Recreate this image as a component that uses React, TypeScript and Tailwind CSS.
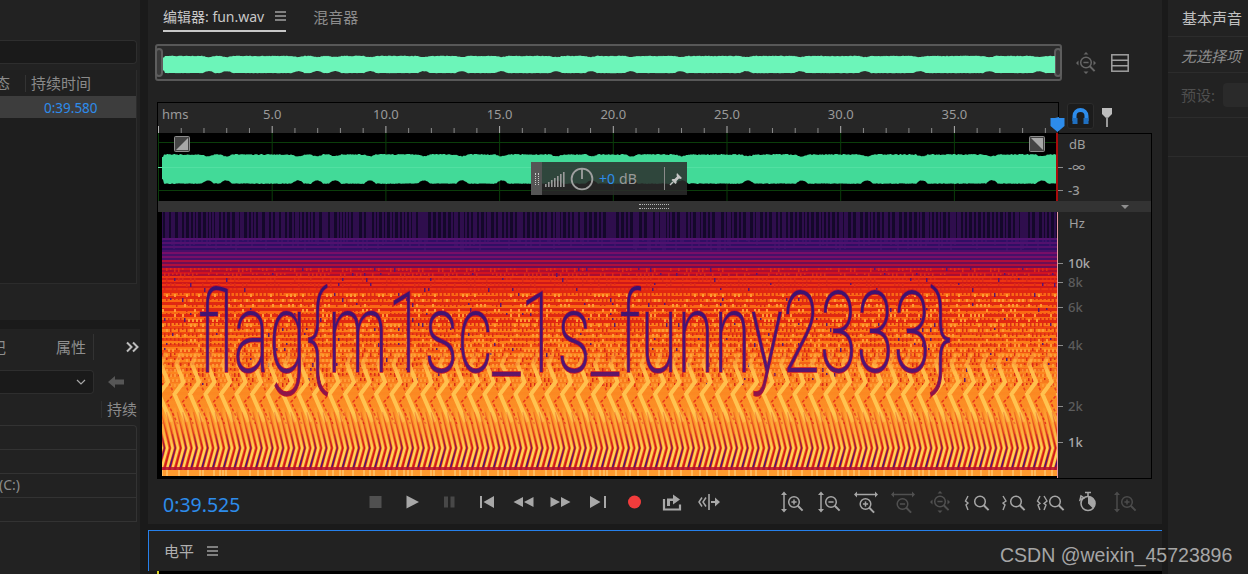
const cjk = { fontFamily: '"Noto Sans", "Noto Sans CJK SC", sans-serif' };

// small seeded random so the picture is the same on each load
function makeRandom(seed: number) {
  let s = seed;
  return () => {
    s = (s * 1664525 + 1013904223) % 4294967296;
    return s / 4294967296;
  };
}

const dips = [46, 64, 136, 155, 173, 208, 262, 300, 340, 395, 430, 470, 520, 586, 640, 705, 760, 830, 880];

function envelope(x: number) {
  let v = 1;
  for (const d of dips) {
    const dist = Math.abs(x - d);
    if (dist < 6) v = Math.min(v, 0.78 + 0.22 * (dist / 6) * (dist / 6));
  }
  return v;
}

function wavePath(width: number, mid: number, amp: number, seed: number) {
  const rand = makeRandom(seed);
  const top: string[] = [];
  const bottom: string[] = [];
  for (let x = 0; x <= width; x += 1) {
    const edge = x < 2 ? 0.7 : 1;
    const e = envelope((x / width) * 896) * edge;
    const eTop = 1 - (1 - e) * 0.55;
    top.push(`${x} ${(mid - amp * eTop * (0.93 + rand() * 0.08)).toFixed(1)}`);
    bottom.unshift(`${x} ${(mid + amp * e * (0.95 + rand() * 0.05)).toFixed(1)}`);
  }
  return `M${top.join("L")}L${bottom.join("L")}Z`;
}

function lerpColor(a: number[], b: number[], t: number) {
  return `rgb(${a.map((v, i) => Math.round(v + (b[i] - v) * t)).join(",")})`;
}

const stops: [number, number[], number[]][] = [
  [26, [48, 14, 100], [84, 16, 110]],
  [38, [120, 14, 104], [72, 16, 104]],
  [48, [176, 14, 60], [110, 14, 84]],
  [56, [210, 18, 32], [170, 14, 48]],
  [64, [238, 52, 18], [206, 24, 26]],
  [78, [250, 104, 20], [226, 40, 16]],
  [110, [252, 126, 26], [238, 70, 16]],
  [170, [252, 140, 36], [250, 112, 24]],
];

function specRows() {
  const rows: { y: number; h: number; fill: string }[] = [];
  let y = 0;
  let i = 0;
  while (y < 256) {
    const h = y < 78 ? 2 : 3;
    let seg = 0;
    while (seg < stops.length - 1 && stops[seg + 1][0] <= y) seg++;
    const t = i % 2 === 0 ? 0 : 1;
    const fill = y < 26 ? "#14082a" : lerpColor(stops[seg][1], stops[seg][2], t);
    rows.push({ y, h, fill });
    y += h;
    i++;
  }
  return rows;
}

function specDetail() {
  const rand = makeRandom(91);
  let purple = "";
  let red = "";
  let light = "";
  let top = "";
  for (let x = 0; x < 896; x += 2 + Math.floor(rand() * 4)) {
    top += `M${x} 0v${26 + Math.floor(rand() * 14)}`;
  }
  // dotted partials through the middle
  for (let row = 56; row < 176; row += 5) {
    for (let x = (row % 3) * 2; x < 896; x += 4) {
      const chance = row < 135 ? 0.7 : 0.4;
      if (rand() < chance) {
        const h = 2 + Math.floor(rand() * 3);
        if (rand() < 0.07) purple += `M${x} ${row}h1.5v${h}h-1.5z`;
        else red += `M${x} ${row}h1.5v${h}h-1.5z`;
      } else if (row > 76) {
        light += `M${x} ${row + 1}h2v3h-2z`;
      }
    }
  }
  return { top, purple, red, light };
}

function chevrons() {
  const out: { yellow: string; dark: string } = { yellow: "", dark: "" };
  for (let x = -30; x < 930; x += 15.5) {
    out.yellow += `M${x + 3} 140L${x - 2} 152L${x + 5} 170L${x - 4} 182L${x + 8} 210`;
    out.dark += `M${x + 10} 152L${x + 5} 168L${x + 11} 182L${x + 4} 190L${x + 15} 212`;
  }
  return out;
}

function fineSlants() {
  let yellow = "";
  let purple = "";
  let red = "";
  for (let x = -20; x < 910; x += 5.4) {
    yellow += `M${x} 196L${x + 9} 236L${x + 3} 258`;
    red += `M${x + 2.9} 200L${x + 11.9} 236L${x + 5.9} 258`;
  }
  for (let x = -20; x < 910; x += 10.8) {
    purple += `M${x + 9} 222L${x + 11.6} 236L${x + 6} 256`;
  }
  return { yellow, purple, red };
}

const rows = specRows();
const detail = specDetail();
const chev = chevrons();
const slants = fineSlants();

function bottomTicks() {
  const rand = makeRandom(7);
  let d = "";
  for (let x = 0; x < 896; x += 3 + Math.floor(rand() * 10)) d += `M${x} 258v6`;
  return d;
}
const baseTicks = bottomTicks();

function Spectrogram() {
  return (
    <svg className="block h-[266px] w-[900px]" viewBox="0 0 900 266">
      <defs>
        <clipPath id="specClip">
          <rect width="896" height="264" />
        </clipPath>
        <linearGradient id="specBase" gradientUnits="userSpaceOnUse" x1="0" x2="0" y1="130" y2="258">
          <stop offset="0" stopColor="#fb8a22" stopOpacity="0" />
          <stop offset="0.35" stopColor="#fb8a22" stopOpacity="0.85" />
          <stop offset="0.6" stopColor="#fc9228" />
          <stop offset="0.8" stopColor="#f2641e" />
          <stop offset="1" stopColor="#e0341e" />
        </linearGradient>
        <linearGradient id="chevY" gradientUnits="userSpaceOnUse" x1="0" x2="0" y1="138" y2="212">
          <stop offset="0" stopColor="#ffb845" stopOpacity="0.15" />
          <stop offset="0.3" stopColor="#ffbe4c" />
          <stop offset="0.85" stopColor="#ffc552" />
          <stop offset="1" stopColor="#ffc552" stopOpacity="0.4" />
        </linearGradient>
        <linearGradient id="chevR" gradientUnits="userSpaceOnUse" x1="0" x2="0" y1="150" y2="212">
          <stop offset="0" stopColor="#ee4a1a" stopOpacity="0.2" />
          <stop offset="0.5" stopColor="#e8381a" />
        </linearGradient>
        <linearGradient id="slantY" gradientUnits="userSpaceOnUse" x1="0" x2="0" y1="196" y2="236">
          <stop offset="0" stopColor="#ffc94e" stopOpacity="0.1" />
          <stop offset="1" stopColor="#ffd256" />
        </linearGradient>
        <linearGradient id="slantR" gradientUnits="userSpaceOnUse" x1="0" x2="0" y1="196" y2="236">
          <stop offset="0" stopColor="#d81e1e" stopOpacity="0.15" />
          <stop offset="1" stopColor="#c8141e" />
        </linearGradient>
        <linearGradient id="slantP" gradientUnits="userSpaceOnUse" x1="0" x2="0" y1="222" y2="250">
          <stop offset="0" stopColor="#7a1450" stopOpacity="0.2" />
          <stop offset="1" stopColor="#4a1478" />
        </linearGradient>
        <linearGradient id="flagInk" gradientUnits="userSpaceOnUse" x1="0" x2="0" y1="-90" y2="30">
          <stop offset="0" stopColor="#3a1270" />
          <stop offset="0.7" stopColor="#4e1676" />
          <stop offset="1" stopColor="#a0143c" />
        </linearGradient>
      </defs>
      <rect width="900" height="266" fill="#000" />
      <g transform="translate(4,0)" clipPath="url(#specClip)">
        {rows.map((r) => (
          <rect key={r.y} x="0" y={r.y} width="896" height={r.h} fill={r.fill} />
        ))}
        <path d={detail.top} stroke="#4b1470" strokeWidth="1" fill="none" />
        <rect y="130" width="896" height="128" fill="url(#specBase)" />
        <path d={detail.light} fill="#fd9a34" />
        <path d={detail.red} fill="#d92a18" />
        <path d={detail.purple} fill="#5a1470" />
        <path d={chev.dark} stroke="url(#chevR)" strokeWidth="1.6" strokeDasharray="3 2" fill="none" />
        <path d={chev.yellow} stroke="url(#chevY)" strokeWidth="4" fill="none" />
        <path d={slants.red} stroke="url(#slantR)" strokeWidth="1.2" fill="none" />
        <path d={slants.yellow} stroke="url(#slantY)" strokeWidth="2.4" fill="none" />
        <path d={slants.purple} stroke="url(#slantP)" strokeWidth="1.3" fill="none" />
        <rect y="255" width="896" height="3" fill="#b5122e" opacity="0.85" />
        <rect y="258" width="896" height="6" fill="#ff9a2e" />
        <path d={baseTicks} stroke="#ffd98a" strokeWidth="1" fill="none" />
        <g transform="translate(36,160) scale(0.588,1)">
          <text
            fill="url(#flagInk)"
            stroke="#c4142c"
            strokeWidth="1.6"
            paintOrder="stroke"
            style={{ fontFamily: "Roboto, sans-serif", fontSize: 114, fontWeight: 200 }}
          >
            {"flag{m1sc_1s_funny2333}"}
          </text>
        </g>
      </g>
      <rect x="899" width="1" height="266" fill="#e79aa0" />
    </svg>
  );
}

const seconds = Array.from({ length: 40 }, (_, i) => i);
const X0 = 0.5;
const PX = 22.74;

function Ruler() {
  return (
    <svg className="block h-[31px] w-[902px]" viewBox="0 0 902 31">
      {seconds.map((s) => (
        <line
          key={s}
          x1={X0 + s * PX}
          x2={X0 + s * PX}
          y1={s % 5 === 0 ? 23 : 25}
          y2="31"
          stroke={s % 5 === 0 ? "#b0b0b0" : "#8a8a8a"}
        />
      ))}
      <text x="4" y="16" fill="#9a9a9a" style={{ fontFamily: '"Noto Sans", sans-serif', fontSize: 13 }}>
        hms
      </text>
      {[5, 10, 15, 20, 25, 30, 35].map((s) => (
        <text
          key={s}
          x={X0 + s * PX}
          y="16"
          textAnchor="middle"
          fill="#9a9a9a"
          style={{ fontFamily: '"Noto Sans", sans-serif', fontSize: 13 }}
        >
          {s}.0
        </text>
      ))}
    </svg>
  );
}

const trackWave = wavePath(896, 36, 15, 33);
const miniWave = wavePath(892, 9.5, 8.8, 12);

function TrackWave() {
  return (
    <svg className="block h-[68px] w-[900px]" viewBox="0 0 900 68">
      <rect width="900" height="68" fill="#000" />
      <line x1="0" x2="900" y1="9.5" y2="9.5" stroke="#0b3d0b" />
      <line x1="0" x2="900" y1="57.5" y2="57.5" stroke="#0b3d0b" />
      {seconds
        .filter((s) => s % 5 === 0)
        .map((s) => (
          <line key={s} x1={X0 + s * PX} x2={X0 + s * PX} y1="0" y2="68" stroke="#0b3d0b" />
        ))}
      <line x1="0" x2="6" y1="34.5" y2="34.5" stroke="#5ce6a8" />
      <path d={trackWave} transform="translate(4,0)" fill="#42da98" />
      <line x1="4" x2="898" y1="34.5" y2="34.5" stroke="#52e0a2" />
      <rect x="898" width="2" height="68" fill="#a80c0c" />
    </svg>
  );
}

function FadeHandle({ flip }: { flip?: boolean }) {
  return (
    <svg className="h-[16px] w-[16px]" viewBox="0 0 16 16">
      <rect x="0.5" y="0.5" width="15" height="15" rx="1" fill="#444" stroke="#8c8c8c" />
      <path d={flip ? "M2 2H14V14Z" : "M14 2V14H2Z"} fill="#a8a8a8" />
    </svg>
  );
}

function Zoomer({
  cx,
  cy,
  mark,
  color,
}: {
  cx: number;
  cy: number;
  mark?: "plus" | "minus";
  color: string;
}) {
  return (
    <g stroke={color} fill="none" strokeWidth="1.5">
      <circle cx={cx} cy={cy} r="5.3" />
      <line x1={cx + 3.8} y1={cy + 3.8} x2={cx + 8.6} y2={cy + 8.6} strokeWidth="2" />
      {mark && <line x1={cx - 2.6} x2={cx + 2.6} y1={cy} y2={cy} />}
      {mark === "plus" && <line x1={cx} x2={cx} y1={cy - 2.6} y2={cy + 2.6} />}
    </g>
  );
}

function Box({ children, wide }: { children: React.ReactNode; wide?: boolean }) {
  return (
    <svg className={wide ? "h-[24px] w-[37px]" : "h-[24px] w-[30px]"} viewBox={wide ? "0 0 37 24" : "0 0 30 24"}>
      {children}
    </svg>
  );
}

const on = "#a6a6a6";
const off = "#505050";

function VArrow({ x, color }: { x: number; color: string }) {
  return (
    <g>
      <line x1={x} x2={x} y1="4" y2="20" stroke={color} strokeWidth="1.5" />
      <path d={`M${x - 3} 5L${x} 1.5L${x + 3} 5ZM${x - 3} 19L${x} 22.5L${x + 3} 19Z`} fill={color} />
    </g>
  );
}

function HArrow({ color }: { color: string }) {
  return (
    <g>
      <line x1="6" x2="24" y1="4.5" y2="4.5" stroke={color} strokeWidth="1.5" />
      <path d={`M6 1.5L3 4.5L6 7.5ZM24 1.5L27 4.5L24 7.5Z`} fill={color} />
    </g>
  );
}

const zoomIcons = [
  <Box key="a"><VArrow x={7} color={on} /><Zoomer cx={17} cy={12} mark="plus" color={on} /></Box>,
  <Box key="b"><VArrow x={7} color={on} /><Zoomer cx={17} cy={12} mark="minus" color={on} /></Box>,
  <Box key="c"><HArrow color={on} /><Zoomer cx={14.5} cy={14} mark="plus" color={on} /></Box>,
  <Box key="d"><HArrow color={off} /><Zoomer cx={14.5} cy={14} mark="minus" color={off} /></Box>,
  <Box key="e">
    <Zoomer cx={15} cy={11.5} mark="minus" color={off} />
    <path d="M15 1L12.5 3.5H17.5ZM5 12L7.5 9.5V14.5ZM25 12L22.5 9.5V14.5ZM15 23L12.5 20.5H17.5Z" fill={off} />
  </Box>,
  <Box key="f">
    <path d="M6 6L3.5 11L6 13L4 15L6 20" stroke={on} strokeWidth="1.4" fill="none" />
    <Zoomer cx={18} cy={11.5} color={on} />
  </Box>,
  <Box key="g">
    <path d="M4 6L7 11L4 13L6 15L4 20" stroke={on} strokeWidth="1.4" fill="none" />
    <Zoomer cx={17} cy={11.5} color={on} />
  </Box>,
  <Box key="h">
    <path d="M4 6L1.5 11L4 13.5L2 15L4 20M8 6L11 11L8 13.5L10 15L8 20" stroke={on} strokeWidth="1.4" fill="none" />
    <Zoomer cx={19} cy={11.5} color={on} />
  </Box>,
  <Box key="i">
    <circle cx="15" cy="13.5" r="7" stroke={on} strokeWidth="1.6" fill="none" />
    <path d="M15 13.5V6.5A7 7 0 0 1 20 18.5Z" fill={on} />
    <path d="M12 2.5H18M15 2.5V6M8 6L7 10L11 8Z" stroke={on} strokeWidth="1.5" fill="none" />
  </Box>,
  <Box key="j">
    <g opacity="0.9">
      <VArrow x={7} color={off} />
      <Zoomer cx={17} cy={12} mark="plus" color={off} />
    </g>
  </Box>,
];

const transportIcons = [
  <Box key="stop" wide><rect x="12.5" y="6" width="12" height="12" fill="#505050" /></Box>,
  <Box key="play" wide><path d="M12.5 5.5L25 12L12.5 18.5Z" fill="#a8a8a8" /></Box>,
  <Box key="pause" wide><path d="M13 6.5h4v11h-4zM19.5 6.5h4v11h-4z" fill="#484848" /></Box>,
  <Box key="start" wide><path d="M12 6h2v12h-2zM26 6v12L15.5 12Z" fill="#a8a8a8" /></Box>,
  <Box key="rew" wide><path d="M8.5 12L18 7V17ZM19 12L28.5 7V17Z" fill="#a8a8a8" /></Box>,
  <Box key="fwd" wide><path d="M28.5 12L19 7V17ZM18 12L8.5 7V17Z" fill="#a8a8a8" /></Box>,
  <Box key="end" wide><path d="M25 6h2v12h-2zM11 6v12L21.5 12Z" fill="#a8a8a8" /></Box>,
  <Box key="rec" wide><circle cx="18.5" cy="12" r="6.5" fill="#f23c3c" /></Box>,
  <Box key="out" wide>
    <path d="M11 9V19.5H27V14.5" stroke="#a8a8a8" strokeWidth="2.2" fill="none" />
    <path d="M14 16V8.5H20V4.5L27 9.5L20 14.5V11H17V16Z" fill="#a8a8a8" />
  </Box>,
  <Box key="skip" wide>
    <path d="M12 7.5L9 12L12 16.5M16 7.5L13 12L16 16.5" stroke="#a8a8a8" strokeWidth="1.5" fill="none" />
    <path d="M19 4V20" stroke="#a8a8a8" strokeWidth="1.6" />
    <path d="M21 11H25V7.5L30 12L25 16.5V13H21Z" fill="#a8a8a8" />
  </Box>,
];

function Lines() {
  return (
    <svg className="h-[10px] w-[11px]" viewBox="0 0 11 10">
      <path d="M0 1h11M0 5h11M0 9h11" stroke="#a0a0a0" strokeWidth="1.3" />
    </svg>
  );
}

function HudPin() {
  return (
    <svg className="h-[14px] w-[14px]" viewBox="0 0 14 14">
      <path d="M8 1L13 6L11.5 7L10 6.5L7.5 9L7.5 11L6.5 12L2.5 8L3.5 7L5.5 7L8 4.5L7.5 3Z" fill="#c4c4c4" />
      <path d="M1 13L4 10" stroke="#c4c4c4" strokeWidth="1.4" />
    </svg>
  );
}

function VolumeHud() {
  return (
    <div className="absolute left-[373px] top-[29px] flex h-[33px] w-[156px] items-center bg-[#2b2b2b]/85">
      <div className="flex h-full w-[11px] items-center justify-center bg-[#555]">
        <div className="h-[12px] w-[4px] border-x border-dotted border-[#c8c8c8]" />
      </div>
      <svg className="ml-[3px] h-[20px] w-[20px]" viewBox="0 0 20 20">
        {[0, 3, 6, 9, 12, 15, 18].map((x, i) => (
          <rect key={x} x={x} y={17 - (i + 1) * 2} width="1.6" height={(i + 1) * 2 + 1} fill="#9a9a9a" />
        ))}
      </svg>
      <svg className="ml-[5px] h-[24px] w-[24px]" viewBox="0 0 24 24">
        <circle cx="12" cy="12" r="10.4" stroke="#a0a0a0" strokeWidth="1.8" fill="none" />
        <line x1="12" x2="12" y1="2" y2="12" stroke="#a0a0a0" strokeWidth="1.8" />
      </svg>
      <span className="ml-[5px] text-[14px] leading-none text-[#2d8ceb]">+0</span>
      <span className="ml-[4px] text-[14px] leading-none text-[#9a9a9a]">dB</span>
      <div className="ml-[27px] h-[23px] w-px bg-[#8a8a8a]" />
      <div className="ml-[4px]">
        <HudPin />
      </div>
    </div>
  );
}

function AxisLabel({ top, children, tone }: { top: number; children: string; tone: string }) {
  return (
    <div className="absolute left-0 flex h-[13px] items-center" style={{ top }}>
      <div className="h-px w-[5px] bg-[#8a8a8a]" />
      <span className={`ml-[5px] text-[13px] font-medium leading-none ${tone}`}>{children}</span>
    </div>
  );
}

function Row({ children }: { children?: React.ReactNode }) {
  return <div className="h-[24px] border-b border-[#333] text-[14px] leading-[22px] text-[#8c8c8c]">{children}</div>;
}

export default function App() {
  return (
    <div className="relative flex h-[574px] w-[1248px] overflow-hidden bg-[#1a1a1a]" style={cjk}>
      {/* left column */}
      <div className="flex w-[140px] shrink-0 flex-col overflow-hidden">
        <div className="h-[320px] bg-[#222] pr-[3px] pt-[40px]">
          <div className="h-[24px] rounded-r-sm border border-l-0 border-[#2e2e2e] bg-[#1a1a1a]" />
          <div className="mt-[6px] border-r border-[#2c2c2c] bg-[#202020]">
            <div className="flex h-[26px] items-center overflow-hidden text-[15px] text-[#8a8a8a]">
              <div className="flex w-[25px] shrink-0 justify-end overflow-hidden pr-[15px]">
                <span className="shrink-0">状态</span>
              </div>
              <div className="h-[17px] w-px bg-[#333]" />
              <span className="ml-[5px] shrink-0">持续时间</span>
            </div>
            <div className="h-[22px] bg-[#3d3d3d] pl-[44px] text-[13.5px] leading-[24px] text-[#2d8ceb]">0:39.580</div>
            <div className="h-[166px] border-b border-[#2c2c2c] bg-[#1e1e1e]" />
          </div>
        </div>
        <div className="mt-[9px] min-h-0 flex-1 bg-[#222]">
          <div className="flex h-[36px] items-center text-[15px] text-[#8f8f8f]">
            <div className="flex w-[56px] shrink-0 overflow-hidden">
              <span className="-ml-[24px] shrink-0">标记</span>
            </div>
            <span>属性</span>
            <div className="ml-[7px] h-[26px] w-px bg-[#333]" />
            <svg className="ml-[32px] h-[12px] w-[13px]" viewBox="0 0 13 12">
              <path d="M1 1.5L5.5 6L1 10.5M7 1.5L11.5 6L7 10.5" stroke="#bdbdbd" strokeWidth="2" fill="none" />
            </svg>
          </div>
          <div className="mt-[5px] flex h-[24px] items-center">
            <div className="flex h-full w-[94px] items-center justify-end rounded-r-sm border border-l-0 border-[#2e2e2e] bg-[#1a1a1a] pr-[7px]">
              <svg className="h-[6px] w-[10px]" viewBox="0 0 10 6">
                <path d="M1 1L5 5L9 1" stroke="#a8a8a8" strokeWidth="1.2" fill="none" />
              </svg>
            </div>
            <svg className="ml-[14px] h-[12px] w-[16px]" viewBox="0 0 16 12">
              <path d="M0 6L7 0V3.5H16V8.5H7V12Z" fill="#565656" />
            </svg>
          </div>
          <div className="flex h-[31px] items-center justify-end pr-[3px] text-[15px] text-[#8a8a8a]">
            <div className="mr-[5px] h-[17px] w-px bg-[#2e2e2e]" />
            持续
          </div>
          <div className="mr-[3px] rounded-tr-sm border-r border-t border-[#333]">
            <Row />
            <Row />
            <Row>
              <span className="-ml-[1px]">(C:)</span>
            </Row>
            <Row />
          </div>
        </div>
      </div>

      {/* editor column */}
      <div className="ml-[8px] flex w-[1014px] shrink-0 flex-col">
        <div className="flex h-[524px] flex-col bg-[#222]">
          <div className="flex h-[32px] items-stretch pl-[15px]">
            <div className="flex items-center gap-[11px] border-b-2 border-[#c8c8c8] pt-[2px] text-[14px] text-[#c8c8c8]">
              <span>编辑器: fun.wav</span>
              <Lines />
            </div>
            <span className="ml-[27px] pt-[6px] text-[15px] text-[#8c8c8c]">混音器</span>
          </div>

          <div className="ml-[7px] mt-[12px] flex h-[37px] items-center">
            <div className="relative h-[37px] w-[907px] rounded-[3px] border-2 border-[#585858] bg-[#2b2b2b]">
              <div className="absolute -left-[2px] top-[2px] h-[29px] w-[8px] rounded-sm border-2 border-[#5e5e5e] bg-[#3a3a3a]" />
              <div className="absolute -right-[2px] top-[2px] h-[29px] w-[8px] rounded-sm border-2 border-[#5e5e5e] bg-[#3a3a3a]" />
              <svg className="absolute left-[6px] top-[9px] h-[19px] w-[892px]" viewBox="0 0 892 19">
                <path d={miniWave} fill="#6cf5b9" />
              </svg>
            </div>
            <svg className="ml-[9px] h-[24px] w-[30px]" viewBox="0 0 30 24">
              <Zoomer cx={15} cy={11.5} mark="minus" color="#666" />
              <path d="M15 1L12.5 3.5H17.5ZM5 12L7.5 9.5V14.5ZM25 12L22.5 9.5V14.5ZM15 23L12.5 20.5H17.5Z" fill="#666" />
            </svg>
            <svg className="ml-[10px] h-[18px] w-[18px]" viewBox="0 0 18 18">
              <rect x="0.8" y="0.8" width="16.4" height="16.4" fill="none" stroke="#a0a0a0" strokeWidth="1.5" />
              <path d="M1 6.2H17M1 11.8H17" stroke="#a0a0a0" strokeWidth="1.5" />
            </svg>
          </div>

          <div className="relative ml-[9px] mt-[21px] flex h-[31px] items-start">
            <div className="h-[31px] w-[902px] border-x border-t border-black bg-[#262626]">
              <Ruler />
            </div>
            <svg className="absolute left-[893px] top-[15px] h-[15px] w-[15px]" viewBox="0 0 15 15">
              <path d="M0.5 1H5L9 0V1H14.5V9L7.5 15L0.5 9Z" fill="#2d8ceb" />
            </svg>
            <div className="ml-[8px] mt-[1px] flex h-[26px] w-[27px] items-center justify-center rounded-[3px] border border-[#2c2c2c] bg-[#1c1c1c]">
              <svg className="h-[17px] w-[17px]" viewBox="0 0 17 17">
                <path d="M2.5 13V8A6 6 0 0 1 14.5 8V13" stroke="#2d8ceb" strokeWidth="4" fill="none" />
                <rect x="0.5" y="10" width="5" height="6" fill="#1f6fc0" />
                <rect x="11.5" y="10" width="5" height="6" fill="#1f6fc0" />
              </svg>
            </div>
            <svg className="ml-[8px] mt-[6px] h-[19px] w-[10px]" viewBox="0 0 10 19">
              <path d="M0 0H10V6L6 10H4L0 6Z" fill="#bdbdbd" />
              <rect x="4" y="9" width="2" height="10" fill="#9a9a9a" />
            </svg>
          </div>

          <div className="ml-[9px] flex w-[995px] flex-col border-x border-b border-black bg-[#232323]">
            <div className="flex h-[68px]">
              <div className="relative w-[900px]">
                <TrackWave />
                <div className="absolute left-[16px] top-[3px]">
                  <FadeHandle />
                </div>
                <div className="absolute left-[871px] top-[3px]">
                  <FadeHandle flip />
                </div>
                <VolumeHud />
              </div>
              <div className="relative flex-1 border-t border-black">
                <span className="absolute left-[11px] top-[4px] text-[13px] leading-none text-[#a0a0a0]">dB</span>
                <AxisLabel top={27} tone="text-[#9a9a9a]">
                  -∞
                </AxisLabel>
                <AxisLabel top={50} tone="text-[#9a9a9a]">
                  -3
                </AxisLabel>
              </div>
            </div>
            <div className="relative flex h-[11px] items-center justify-center bg-[#333]">
              <div className="mr-[2px] h-[5px] w-[30px] border-y border-dotted border-[#b8b8b8]" />
              <svg className="absolute left-[963px] top-[4px] h-[4px] w-[8px]" viewBox="0 0 8 4">
                <path d="M0 0H8L4 4Z" fill="#8f8f8f" />
              </svg>
            </div>
            <div className="flex h-[266px]">
              <Spectrogram />
              <div className="relative flex-1">
                <span className="absolute left-[11px] top-[5px] text-[13px] leading-none text-[#a0a0a0]">Hz</span>
                <AxisLabel top={45} tone="text-[#a8a8a8]">
                  10k
                </AxisLabel>
                <AxisLabel top={64} tone="text-[#5c5c5c]">
                  8k
                </AxisLabel>
                <AxisLabel top={89} tone="text-[#5c5c5c]">
                  6k
                </AxisLabel>
                <AxisLabel top={127} tone="text-[#5c5c5c]">
                  4k
                </AxisLabel>
                <AxisLabel top={188} tone="text-[#5c5c5c]">
                  2k
                </AxisLabel>
                <AxisLabel top={224} tone="text-[#a8a8a8]">
                  1k
                </AxisLabel>
              </div>
            </div>
          </div>

          <div className="flex flex-1 items-center pl-[15px]">
            <span className="w-[194px] pt-[6px] text-[19.5px] leading-none text-[#2d8ceb]">0:39.525</span>
            <div className="flex">
              {transportIcons.map((icon, i) => (
                <div key={i} className="flex w-[37px] justify-center">
                  {icon}
                </div>
              ))}
            </div>
            <div className="ml-[46px] flex">
              {zoomIcons.map((icon, i) => (
                <div key={i} className="flex w-[37px] justify-center">
                  {icon}
                </div>
              ))}
            </div>
          </div>
        </div>

        <div className="mt-[6px] flex min-h-0 flex-1 flex-col">
          <div className="flex h-[41px] items-center gap-[13px] border-l border-t border-[#2680eb] bg-[#222] pl-[15px] text-[15px] text-[#b0b0b0]">
            <span>电平</span>
            <Lines />
          </div>
          <div className="ml-[9px] flex-1 border-l-2 border-[#d8d020] bg-black" />
        </div>
      </div>

      {/* right column */}
      <div className="ml-[6px] flex-1 bg-[#222] text-[15px]">
        <div className="h-[37px] border-b border-[#2c2c2c] pl-[14px] pt-[7px] text-[#c0c0c0]">基本声音</div>
        <div className="h-[36px] border-b border-[#2c2c2c] pl-[13px] pt-[8px] italic text-[#8c8c8c]">无选择项</div>
        <div className="flex h-[45px] items-center border-b border-[#2c2c2c] pl-[13px] text-[#4f4f4f]">
          <span className="shrink-0">预设:</span>
          <div className="ml-[8px] h-[24px] flex-1 rounded-l-sm bg-[#2a2a2a]" />
        </div>
        <div className="h-[39px] border-b border-[#2c2c2c]" />
      </div>

      {/* watermark on top of the screenshot */}
      <span
        className="absolute left-[1000px] top-[544px] text-[19.5px] leading-[22px] text-[#a6a6a6]"
        style={{ fontFamily: '"Liberation Sans", sans-serif' }}
      >
        CSDN @weixin_45723896
      </span>
    </div>
  );
}
